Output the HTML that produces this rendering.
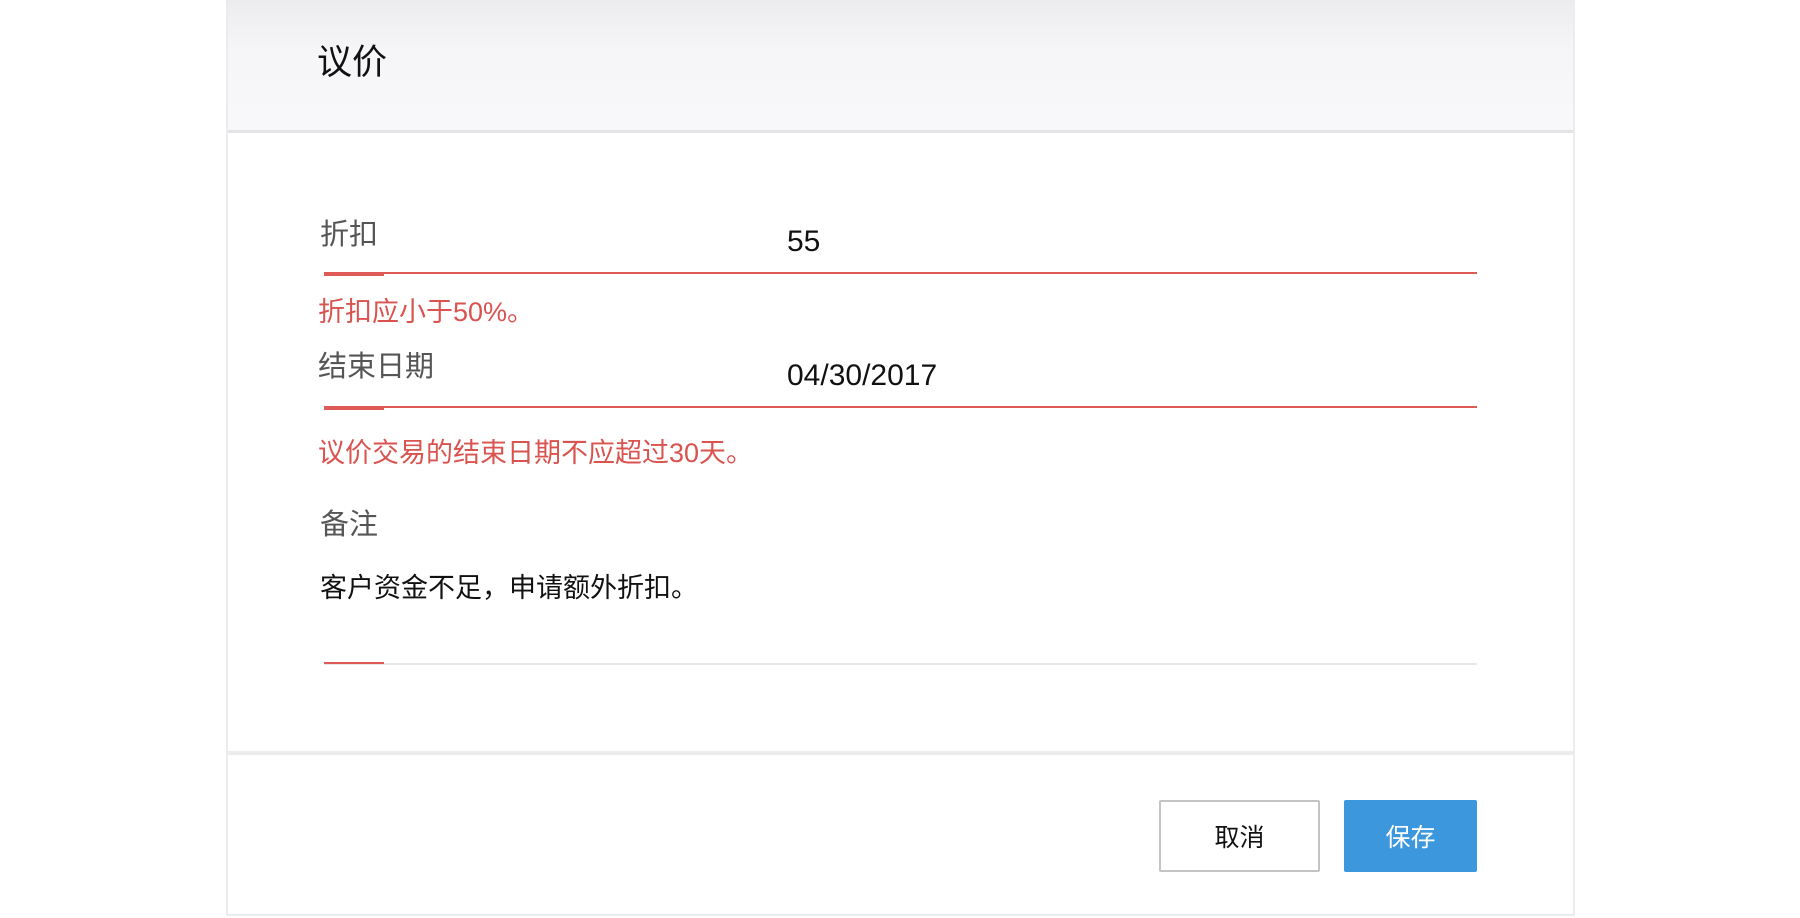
<!DOCTYPE html>
<html><head><meta charset="utf-8"><style>
*{margin:0;padding:0;box-sizing:border-box}
body{width:1800px;height:918px;background:#fff;position:relative;overflow:hidden;font-family:"Liberation Sans","Noto Sans CJK SC",sans-serif}
.panel{position:absolute;left:226px;top:0;width:1349px;height:916px;border:2px solid #ececee;border-top:none;background:#fff}
.head{position:absolute;left:0;top:0;width:100%;height:133px;background:linear-gradient(#ececee,#f6f6f8 40%,#f8f8fa);border-bottom:3px solid #e4e4e6}
.t{position:absolute;white-space:nowrap;line-height:1}
.line{position:absolute;left:96px;width:1153px;height:2px;background:#e05a55}
.seg{position:absolute;left:96px;width:60px;height:4px;background:#e05a55}
.err{color:#d9534f;font-size:27px}
.lab{color:#555;font-size:29px}
.val{color:#111;font-size:30px}
.foot{position:absolute;left:0;top:751px;width:100%;height:4px;background:#ececee}
.btn{position:absolute;top:800px;height:72px;font-size:25px;display:flex;align-items:center;justify-content:center}
</style></head><body>
<div class="panel">
<div class="head"></div>
<div class="t" style="left:89px;top:45px;font-size:35px;color:#111">议价</div>
<div class="t lab" style="left:92px;top:221px">折扣</div>
<div class="t val" style="left:559px;top:227px">55</div>
<div class="line" style="top:272px"></div><div class="seg" style="top:272px"></div>
<div class="t err" style="left:90px;top:299px">折扣应小于50%。</div>
<div class="t lab" style="left:90px;top:353px">结束日期</div>
<div class="t val" style="left:559px;top:361px">04/30/2017</div>
<div class="line" style="top:406px"></div><div class="seg" style="top:406px"></div>
<div class="t err" style="left:90px;top:440px">议价交易的结束日期不应超过30天。</div>
<div class="t lab" style="left:92px;top:511px">备注</div>
<div class="t" style="left:92px;top:575px;font-size:27px;color:#111">客户资金不足，申请额外折扣。</div>
<div class="line" style="top:663px;background:#e8e8e8"></div><div class="seg" style="top:662px;height:2px"></div>
<div class="foot"></div>
<div class="btn" style="left:931px;width:161px;border:2px solid #c4c4c4;border-radius:2px;color:#111">取消</div>
<div class="btn" style="left:1116px;width:133px;background:#3d97dd;border-radius:2px;color:#fff">保存</div>
</div>
</body></html>
